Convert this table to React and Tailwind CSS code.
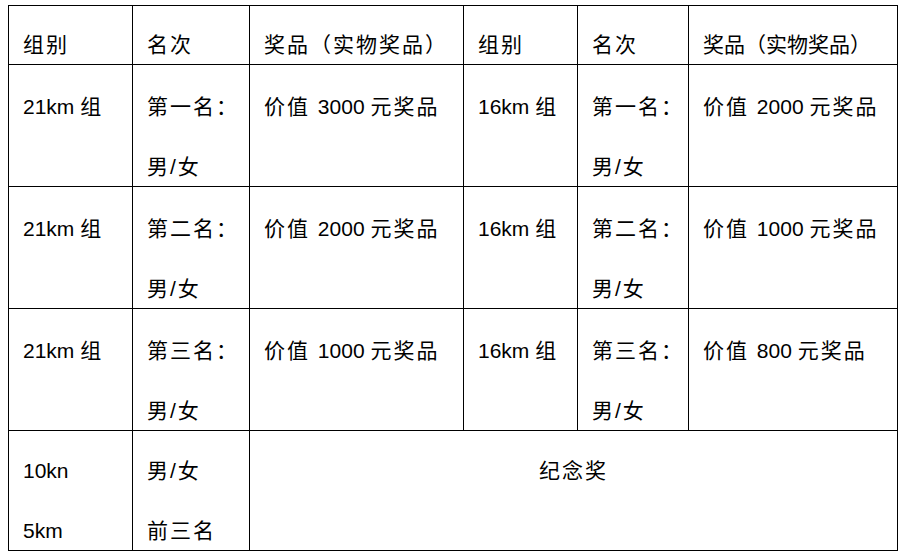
import React from 'react';

const font = { fontFamily: '"Liberation Sans", "Noto Sans CJK SC", sans-serif' };

const L = ({ children }) => <span className="tracking-normal">{children}</span>;

const rows = [
  ['21km', '第一名：', '3000', '16km', '第一名：', '2000'],
  ['21km', '第二名：', '2000', '16km', '第二名：', '1000'],
  ['21km', '第三名：', '1000', '16km', '第三名：', '800'],
];

function Cell({ children, pt = 'pt-[12px]' }) {
  return (
    <td className="border border-black align-top p-0 px-[14px] whitespace-nowrap">
      <div className={'h-[100px] leading-[60px] ' + pt}>{children}</div>
    </td>
  );
}

export default function App() {
  return (
    <div className="min-h-screen bg-white pt-[5px] pl-[8px] text-black" style={font}>
      <table className="table-fixed border-collapse w-[889px] text-[21px] tracking-[2px]">
        <colgroup>
          <col className="w-[124px]" />
          <col className="w-[117px]" />
          <col className="w-[214px]" />
          <col className="w-[114px]" />
          <col className="w-[111px]" />
          <col className="w-[209px]" />
        </colgroup>
        <tbody>
          <tr className="h-[59px]">
            {['组别', '名次', '奖品（实物奖品）', '组别', '名次', '奖品（实物奖品）'].map((t, i) => (
              <td key={i} className="border border-black align-top p-0 px-[14px] whitespace-nowrap">
                <div className={'h-[40px] pt-[19px] leading-[40px] ' + (i === 5 ? 'tracking-[0px]' : '')}>{t}</div>
              </td>
            ))}
          </tr>
          {rows.map((r, i) => (
            <tr key={i} className="h-[122px]">
              <Cell><L>{r[0]} </L>组</Cell>
              <Cell>
                {r[1]}
                <br />
                男/女
              </Cell>
              <Cell>价值 <L>{r[2]} </L>元奖品</Cell>
              <Cell><L>{r[3]} </L>组</Cell>
              <Cell>
                {r[4]}
                <br />
                男/女
              </Cell>
              <Cell>价值 <L>{r[5]} </L>元奖品</Cell>
            </tr>
          ))}
          <tr className="h-[120px]">
            <Cell pt="pt-[10px]">
              <L>10kn</L>
              <br />
              <L>5km</L>
            </Cell>
            <Cell pt="pt-[10px]">
              男/女
              <br />
              前三名
            </Cell>
            <td colSpan={4} className="border border-black align-top p-0 text-center">
              <div className="h-[100px] pt-[10px] leading-[60px]">纪念奖</div>
            </td>
          </tr>
        </tbody>
      </table>
    </div>
  );
}
